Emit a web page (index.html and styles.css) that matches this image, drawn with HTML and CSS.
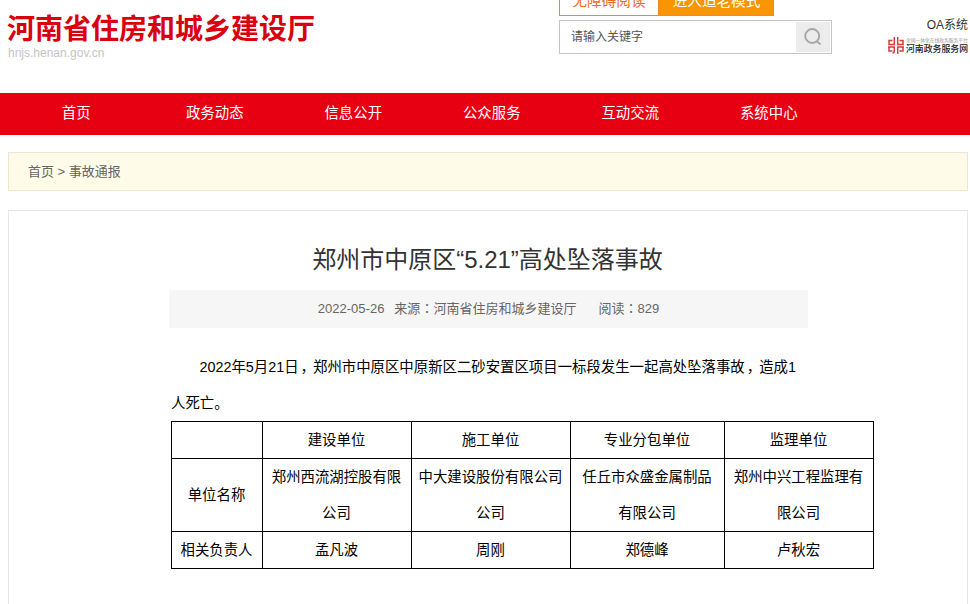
FILE: index.html
```html
<!DOCTYPE html>
<html lang="zh-CN">
<head>
<meta charset="utf-8">
<title>郑州市中原区“5.21”高处坠落事故</title>
<link rel="stylesheet" href="styles.css">
</head>
<body>
<header class="header">
  <div class="brand">
    <div class="brand-name">河南省住房和城乡建设厅</div>
    <div class="brand-url">hnjs.henan.gov.cn</div>
  </div>
  <div class="tools">
    <div class="modes"><a class="mode mode-read">无障碍阅读</a><a class="mode mode-elder">进入适老模式</a></div>
    <div class="search">
      <span class="search-text">请输入关键字</span>
      <span class="search-btn"><svg width="20" height="20" viewBox="0 0 20 20" fill="none" stroke="#a6a6a6" stroke-width="1.9"><circle cx="9.2" cy="9" r="7"/><path d="M13.5 14.2L17.6 17.2"/></svg></span>
    </div>
  </div>
  <div class="links">
    <a class="oa">OA系统</a>
    <div class="service">
      <svg class="service-logo" width="16" height="17" viewBox="0 0 16 17" fill="none" stroke="#d23c3e" stroke-width="1.5"><path d="M6.3 0V7.5H1V3.5H4.5M9.7 0V7.5H15V3.5H11.5M0 10H6.3V14.5Q6.3 16 4.5 16M1 10V14H4.5M16 10H9.7V17M15 10V14H11.5"/></svg>
      <div class="service-text"><span class="service-small">全国一体化在线政务服务平台</span><span class="service-name">河南政务服务网</span></div>
    </div>
  </div>
</header>
<nav class="nav"><a>首页</a><a>政务动态</a><a>信息公开</a><a>公众服务</a><a>互动交流</a><a>系统中心</a></nav>
<div class="crumbs">首页 &gt; 事故通报</div>
<main class="article">
  <h1 class="title">郑州市中原区“5.21”高处坠落事故</h1>
  <div class="meta"><span>2022-05-26</span><span class="source">来源<span class="colon" lang="zh-Hant">：</span>河南省住房和城乡建设厅</span><span>阅读<span class="colon" lang="zh-Hant">：</span>829</span></div>
  <p class="text">2022年5月21日<span class="comma">，</span>郑州市中原区中原新区二砂安置区项目一标段发生一起高处坠落事故<span class="comma">，</span>造成1<br>人死亡。</p>
  <table class="units">
    <colgroup><col class="c1"><col class="c2"><col class="c3"><col class="c4"><col class="c5"></colgroup>
    <tr><td></td><td>建设单位</td><td>施工单位</td><td>专业分包单位</td><td>监理单位</td></tr>
    <tr><td>单位名称</td><td>郑州西流湖控股有限<br>公司</td><td>中大建设股份有限公司<br>公司</td><td>任丘市众盛金属制品<br>有限公司</td><td>郑州中兴工程监理有<br>限公司</td></tr>
    <tr><td>相关负责人</td><td>孟凡波</td><td>周刚</td><td>郑德峰</td><td>卢秋宏</td></tr>
  </table>
</main>
</body>
</html>
```
FILE: styles.css
```css
* { box-sizing: border-box; }
body {
  margin: 0;
  height: 604px;
  overflow: hidden;
  background: #fff;
  font-family: "Liberation Sans", "Noto Sans CJK SC", sans-serif;
  font-size: 13px;
  color: #666;
}
.header { display: flex; height: 93px; padding-left: 7px; }
.brand { width: 552px; padding-top: 10px; }
.brand-name { color: #d9000f; font-size: 28px; font-weight: 700; line-height: 40px; white-space: nowrap; }
.brand-url { color: #c4c4c4; font-size: 12px; line-height: 14px; margin-top: -4px; padding-left: 1px; }
.tools { width: 273px; }
.modes { display: flex; height: 16px; margin-bottom: 4px; overflow: hidden; align-items: flex-end; }
.mode { height: 31px; line-height: 31px; text-align: center; font-size: 14.6px; border: 1px solid #f58a20; }
.mode-read { width: 100px; color: #ee6a2c; background: #fff; }
.mode-elder { width: 115px; color: #fff; background: #f99500; }
.search { display: flex; justify-content: space-between; height: 34px; border: 1px solid #c6c6c6; }
.search-text { padding-left: 11px; font-size: 12px; line-height: 32px; color: #555; }
.search-btn { width: 34px; margin: 1px; background: #ececec; display: flex; align-items: center; justify-content: center; }
.links { flex: 1; display: flex; flex-direction: column; align-items: flex-end; padding-top: 16px; white-space: nowrap; }
.oa { font-size: 12px; line-height: 18px; color: #333; padding-right: 2px; }
.service { display: flex; gap: 2px; margin-top: 3px; padding-right: 1px; }
.service-text { width: 63px; display: flex; flex-direction: column; }
.service-small { font-size: 4.75px; line-height: 7px; color: #999; }
.service-name { font-size: 8.9px; line-height: 10px; color: #222; font-weight: 500; }
.nav { display: flex; height: 42px; padding-left: 7px; background: #e60012; }
.nav a { width: 138.5px; text-align: center; color: #fff; font-size: 14.4px; line-height: 40px; }
.crumbs { width: 960px; height: 39px; margin: 17px 0 0 8px; padding-left: 19px; border: 1px solid #ede8c8; background: #fefbe9; line-height: 37px; }
.article { width: 960px; height: 394px; margin: 19px 0 0 8px; padding: 29px 159px 0 160px; border: 1px solid #e6e6e6; border-bottom: 0; }
.title { margin: 0; padding-right: 2px; text-align: center; font-size: 24px; font-weight: 400; line-height: 40px; color: #333; }
.meta { display: flex; justify-content: center; height: 38px; margin-top: 10px; background: #f6f6f6; line-height: 38px; }
.source { margin: 0 22px 0 10px; }
.colon { font-family: "Noto Sans CJK TC", sans-serif; line-height: 1; }
.comma { position: relative; left: 2px; }
.text { margin: 21px 0 0 2px; text-indent: 28.4px; font-size: 14.4px; line-height: 36px; color: #000; white-space: nowrap; }
.units { width: 703px; margin-left: 2px; border-collapse: collapse; table-layout: fixed; font-size: 14.4px; line-height: 36px; color: #000; text-align: center; }
.units td { height: 37px; padding: 0 1px 0 0; border: 1px solid #000; white-space: nowrap; }
.c1 { width: 91px; }
.c2 { width: 149px; }
.c3 { width: 159px; }
.c4 { width: 154px; }
.c5 { width: 149px; }
```
